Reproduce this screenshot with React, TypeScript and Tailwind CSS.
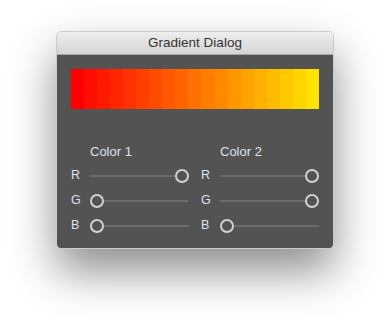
import React from 'react';

const STEPS = 19;
const segments = Array.from({ length: STEPS }, (_, i) => {
  const g = Math.round((i / (STEPS - 1)) * 226);
  return `rgb(255, ${g}, 0)`;
});

type SliderProps = { value: number };

const Slider: React.FC<SliderProps> = ({ value }) => (
  <div className="relative h-[14px] w-[99px] flex items-center">
    <div className="h-[2px] w-full bg-[#6c6c6c] rounded-full" />
    <div
      className="absolute top-0 w-[14px] h-[14px] rounded-full border-2 border-[#d2d2d2] bg-[#535353]"
      style={{ left: `${value * 85}px` }}
    />
  </div>
);

const ColorColumn: React.FC<{ title: string; values: number[] }> = ({ title, values }) => (
  <div className="flex flex-col w-[130px] shrink-0">
    <div className="h-[16px] leading-[16px] pl-[19px] text-[13px] text-[#dde2ec]">{title}</div>
    <div className="mt-[3px] flex flex-col">
      {['R', 'G', 'B'].map((ch, i) => (
        <div key={ch} className="h-[25px] flex items-center">
          <span className="w-[19px] text-[12.5px] text-[#dde2ec]">{ch}</span>
          <Slider value={values[i]} />
        </div>
      ))}
    </div>
  </div>
);

const App: React.FC = () => {
  return (
    <div
      className="w-[390px] h-[329px] bg-white pt-[31px] pl-[56px]"
      style={{ fontFamily: '"Liberation Sans", Arial, sans-serif' }}
    >
      <div className="w-[278px] rounded-[5px] overflow-hidden border border-black/20 shadow-[0_22px_45px_rgba(0,0,0,0.45)]">
        <div className="h-[23px] bg-gradient-to-b from-[#ededed] to-[#d5d5d5] border-b border-[#a8a8a8] flex items-center justify-center text-[13.5px] text-[#333]">
          Gradient Dialog
        </div>
        <div className="bg-[#535353] px-[14px] pt-[14px] pb-[10px]">
          <div className="flex h-[40px]">
            {segments.map((c, i) => (
              <div key={i} className="flex-1 h-full" style={{ background: c }} />
            ))}
          </div>
          <div className="mt-[35px] flex">
            <ColorColumn title="Color 1" values={[1, 0, 0]} />
            <ColorColumn title="Color 2" values={[1, 1, 0]} />
          </div>
        </div>
      </div>
    </div>
  );
};

export default App;
